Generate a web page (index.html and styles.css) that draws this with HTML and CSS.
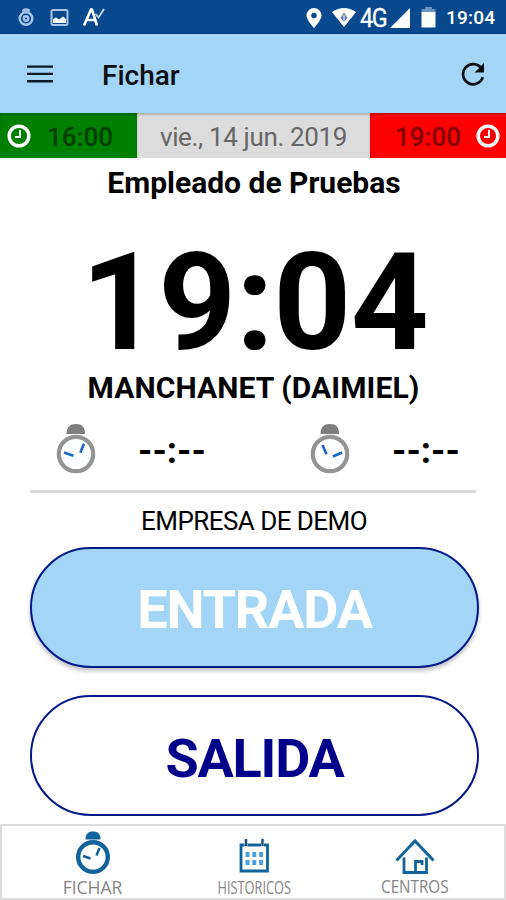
FILE: index.html
```html
<!DOCTYPE html>
<html lang="es">
<head>
<meta charset="utf-8">
<title>Fichar</title>
<link rel="stylesheet" href="styles.css">
</head>
<body>
<div class="status">
  <div class="status-left">
    <svg width="90" height="22" viewBox="0 0 90 22" fill="none">
      <g stroke="#a9c7e8" stroke-width="2.400"><circle cx="10" cy="13.500" r="6.300"/><circle cx="10" cy="13.500" r="2.200"/><path d="M7 6.500Q7 4.500 10 4.500T13 6.500"/></g>
      <rect x="35.500" y="5" width="16" height="15" rx="1.500" stroke="#a9c7e8" stroke-width="2"/>
      <path d="M37 18v-4l3-1.500 3 2 4-3 3 2.500v4z" fill="#fff"/>
      <path d="M68 20.500L75 4.500h1L81 20.500M70.500 15h9" stroke="#fff" stroke-width="2.600"/>
      <path d="M79.500 9l3 3.500L88 4" stroke="#c8dcf3" stroke-width="1.800"/>
    </svg>
  </div>
  <div class="status-right">
    <svg class="pin" width="16" height="20" viewBox="0 0 16 20"><path fill="#fff" fill-rule="evenodd" d="M8 0a7.500 7.500 0 0 0-7.500 7.500C.5 12 8 20 8 20s7.500-8 7.500-12.500A7.500 7.500 0 0 0 8 0zm0 4.800a2.700 2.700 0 1 1 0 5.400 2.700 2.700 0 0 1 0-5.400z"/></svg>
    <svg class="wifi" width="24" height="19" viewBox="0 0 24 19"><path fill="#fff" d="M0 4Q12-4 24 4L12 19z"/><path d="M12 4.500L8.500 10 12 14 15.500 10z" fill="#5d7fa5"/><path d="M12 7v6" stroke="#fff"/></svg>
    <span class="net">4G</span>
    <svg class="signal" width="20" height="20" viewBox="0 0 20 20"><path fill="#fff" d="M20 0v20H0z"/></svg>
    <svg class="battery" width="15" height="21" viewBox="0 0 15 21"><path fill="#6b92bd" d="M4 0h7v2h3.500v4H.5V2H4z"/><path fill="#fff" d="M.5 5h14v15.500H.5z"/></svg>
    <span class="status-time">19:04</span>
  </div>
</div>
<header class="toolbar">
  <svg width="26" height="18" viewBox="0 0 26 18"><path d="M0 1.600h26M0 8.900h26M0 16.200h26" stroke="#0b1a26" stroke-width="2.400"/></svg>
  <h1 class="title">Fichar</h1>
  <svg class="refresh" width="24" height="24" viewBox="0 0 24 24"><path d="M20.300 6.200A10.100 10.100 0 1 0 21.800 15.200" fill="none" stroke="#0b0f14" stroke-width="2.700"/><path d="M23 1v9.500h-9.500z" fill="#0b0f14"/></svg>
</header>
<div class="strip">
  <div class="slot start">
    <svg width="24" height="24" viewBox="0 0 24 24" fill="none" stroke="#fff"><circle cx="12" cy="12" r="9.800" stroke-width="3.500"/><path d="M13 6v7H8" stroke-width="2"/></svg>
    <span>16:00</span>
  </div>
  <div class="date">vie., 14 jun. 2019</div>
  <div class="slot end">
    <span>19:00</span>
    <svg width="24" height="24" viewBox="0 0 24 24" fill="none" stroke="#fff"><circle cx="12" cy="12" r="9.800" stroke-width="3.500"/><path d="M13 6v7H8" stroke-width="2"/></svg>
  </div>
</div>
<main class="main">
  <div class="employee">Empleado de Pruebas</div>
  <div class="clock">19:04</div>
  <div class="place">MANCHANET (DAIMIEL)</div>
  <div class="marks">
    <div class="mark">
      <svg width="40" height="51" viewBox="0 0 40 51"><path d="M10.500 11C10.500 4 14 1 20 1s9 3 9 10z" fill="#7e7e7e"/><circle cx="20" cy="31" r="17.200" fill="#fdfeff" stroke="#949494" stroke-width="4.200"/><path d="M8 29.500l9.500 3.200M24.300 29.700l3.700-9" stroke="#1767c5" stroke-width="2.600"/></svg>
      <span>--:--</span>
    </div>
    <div class="mark">
      <svg width="40" height="51" viewBox="0 0 40 51"><path d="M10.500 11C10.500 4 14 1 20 1s9 3 9 10z" fill="#7e7e7e"/><circle cx="20" cy="31" r="17.200" fill="#fdfeff" stroke="#949494" stroke-width="4.200"/><path d="M12.500 22l4 9.300M23 33.500l9-4" stroke="#1767c5" stroke-width="2.600"/></svg>
      <span>--:--</span>
    </div>
  </div>
  <div class="company">EMPRESA DE DEMO</div>
  <button class="btn btn-in">ENTRADA</button>
  <button class="btn btn-out">SALIDA</button>
</main>
<nav class="nav">
  <div class="tab">
    <svg width="36" height="44" viewBox="0 0 36 44"><path d="M10.500 9.500C10.500 4 13 1.500 18 1.500S25.500 4 25.500 9.500z" fill="#10649b"/><circle cx="18" cy="27" r="14.800" fill="#fff" stroke="#10649b" stroke-width="4.400"/><path d="M8 26l7.500 2.500M21.500 25.500l3-7.500" stroke="#10649b" stroke-width="2.600"/></svg>
    <span class="label fichar">FICHAR</span>
  </div>
  <div class="tab">
    <svg width="32" height="36" viewBox="0 0 32 36"><path d="M6.500 7H3v26h26.500V7H26M9.500 7h13.500" fill="none" stroke="#10649b" stroke-width="2.800"/><path d="M8 1v7M24.500 1v7" stroke="#174e7b" stroke-width="2.400"/><path d="M7.500 16.500h4M14.300 16.500h4M21.100 16.500h4M7.500 24.500h4M14.300 24.500h4M21.100 24.500h4" stroke="#4aa1e2" stroke-width="5"/></svg>
    <span class="label historicos">HISTORICOS</span>
  </div>
  <div class="tab">
    <svg width="40" height="36" viewBox="0 0 40 36" fill="none" stroke="#10649b"><path d="M1.500 22.500L20 3 38.500 22.500" stroke-width="3"/><path d="M9 19.500v15h22.500v-15M20.500 34V23.500h6.500v3.500" stroke-width="2.800"/></svg>
    <span class="label centros">CENTROS</span>
  </div>
</nav>
</body>
</html>
```
FILE: styles.css
```css
* { box-sizing: border-box; }
body {
  margin: 0;
  width: 506px;
  height: 900px;
  overflow: hidden;
  background: #fff;
  color: #000;
  font-family: Roboto, "Liberation Sans", sans-serif;
  display: flex;
  flex-direction: column;
}
svg { display: block; flex: none; }
span { white-space: nowrap; }

.status {
  height: 34px;
  background: #07498c;
  border-bottom: 1px solid #062e82;
  display: flex;
  justify-content: space-between;
  color: #fff;
}
.status-left { padding: 5px 0 0 16px; }
.status-right { display: flex; align-items: center; padding: 2px 10px 0 0; }
.wifi { margin-left: 10px; }
.net { font-size: 26px; line-height: 32px; width: 28px; margin-left: 4px; letter-spacing: -1.500px; transform: scaleX(.9); transform-origin: left; -webkit-text-stroke: .3px #fff; }
.signal { margin-left: 2px; }
.battery { margin-left: 11px; }
.status-time { font-size: 19px; font-weight: 500; width: 50px; margin-left: 10px; letter-spacing: .2px; }

.toolbar {
  height: 79px;
  background: #a3d5f6;
  display: flex;
  align-items: center;
  padding: 1px 21px 0 27px;
}
.title { margin: 3px 0 0 49px; font-size: 28px; font-weight: 500; line-height: 40px; color: #0b0f14; }
.refresh { margin-left: auto; }

.strip { height: 45px; display: flex; line-height: 46px; }
.slot, .date { box-shadow: inset 0 2px 2px rgba(0, 0, 0, .2); padding-top: 1px; }
.slot { display: flex; align-items: center; font-size: 26px; font-weight: 500; }
.slot span { padding-top: 2px; }
.start { width: 137px; background: #008000; color: #003f00; padding-left: 7px; gap: 16px; }
.end { width: 136px; background: #f00; color: #800000; padding-left: 25px; gap: 15px; }
.date { width: 233px; background: #dcdcdc; color: #666; font-size: 26px; letter-spacing: -.35px; text-align: center; }

.main { height: 666px; text-align: center; display: flex; flex-direction: column; }
.employee { height: 50px; line-height: 50px; font-size: 30px; font-weight: 700; padding-left: 2px; }
.clock { height: 156px; font-size: 136px; line-height: 190px; letter-spacing: -.7px; font-weight: 700; padding-left: 3px; }
.place { height: 46px; line-height: 47px; font-size: 30px; font-weight: 700; letter-spacing: .1px; padding-left: 1px; }
.marks {
  height: 83px;
  margin: 0 30px;
  border-bottom: 3px solid #d8d8d8;
  display: flex;
  padding: 13px 0 0 26px;
}
.mark { width: 254px; flex: none; display: flex; gap: 42px; font-size: 36.500px; font-weight: 700; line-height: 55px; }
.mark + .mark { width: 164px; }
.company { height: 54px; line-height: 57px; font-size: 26px; letter-spacing: -.55px; padding-left: 2px; }
.btn {
  width: 449px;
  height: 121px;
  margin-left: 30px;
  border: 2px solid #04198a;
  border-radius: 61px;
  font-family: inherit;
  font-weight: 700;
  font-size: 54px;
  letter-spacing: -1.200px;
  padding: 3px 0 0;
}
.btn-in { background: #a3d5f6; color: #fff; box-shadow: 0 3px 4px rgba(0, 0, 0, .25); }
.btn-out { margin-top: 27px; padding-top: 5px; background: #fff; color: #00008b; }

.nav {
  height: 76px;
  border: 2px solid #dcdcdc;
  display: grid;
  grid-template-columns: 181px 142px 180px;
  font-family: "Open Sans", sans-serif;
  color: #858585;
}
.tab { display: flex; flex-direction: column; align-items: center; justify-content: flex-end; }
.label { line-height: 24px; font-size: 17.500px; }
.fichar { transform: translateY(1px); }
.historicos { transform: translateY(1px) scaleX(.73); }
.centros { transform: scaleX(.87); }
```
